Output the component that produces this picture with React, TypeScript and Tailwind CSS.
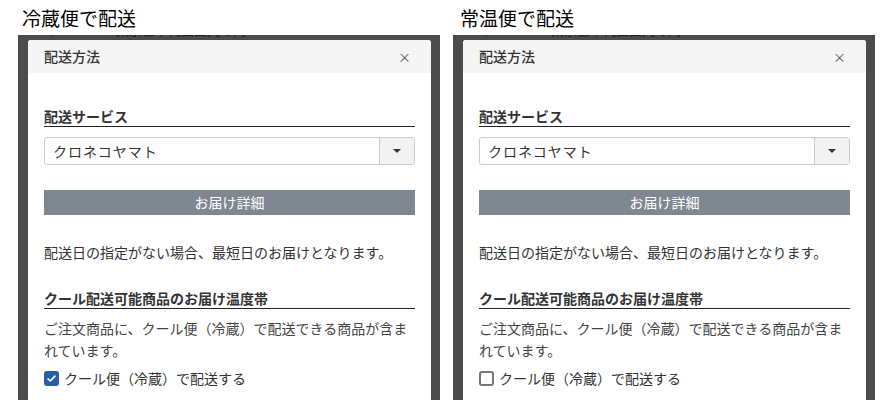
const font = { fontFamily: '"Noto Sans CJK JP", "Noto Sans", sans-serif' };

function CheckIcon() {
  return (
    <svg viewBox="0 0 16 16" className="h-[11px] w-[11px]" fill="none">
      <path d="M3 8.5l3.2 3L13 4.5" stroke="white" strokeWidth="2.4" strokeLinecap="round" strokeLinejoin="round" />
    </svg>
  );
}

function Panel({ title, checked, titleOffset }: { title: string; checked: boolean; titleOffset: string }) {
  return (
    <div className="flex w-[422px] shrink-0 flex-col">
      {/* page title above the modal screenshot */}
      <div className={`h-[35px] text-[19px] leading-[35px] text-black ${titleOffset}`}>{title}</div>

      {/* dimmed page + modal */}
      <div className="flex flex-1 flex-col overflow-hidden bg-[#4b4b4b] pl-[10px] pr-[9px]">
        <div className="h-[5px] overflow-hidden pl-[17px]">
          <div className="-mt-[13px] text-[13px] leading-[16px] text-[#1c1c1c]">〒100-0005 東京都千代田区丸の内1-1-1</div>
        </div>

        <div className="flex-1 rounded-t-[3px] bg-white">
          <div className="flex h-[33px] items-center justify-between rounded-t-[3px] bg-[#f5f5f5] pl-4 pr-[20px]">
            <span className="text-[14px] font-medium text-[#333]">配送方法</span>
            <span className="text-[13px] text-[#555]">×</span>
          </div>

          <div className="px-4 pt-[33px] text-[#333]">
            <div className="border-b border-[#222] text-[14px] font-bold leading-[20px]">配送サービス</div>

            <div className="mt-[10px] flex h-[28px] overflow-hidden rounded-[3px] border border-[#cccccc]">
              <div className="flex flex-1 items-center pl-[8px] text-[14px] tracking-[1px] text-[#333]">クロネコヤマト</div>
              <div className="flex w-[35px] items-center justify-center border-l border-[#cccccc] bg-[#f2f2f2]">
                <span className="h-0 w-0 border-x-[4px] border-t-[4px] border-x-transparent border-t-[#333]" />
              </div>
            </div>

            <div className="mt-[25px] flex h-[25px] items-center justify-center bg-[#7f8890] text-[14px] text-white">お届け詳細</div>

            <div className="mt-[27px] text-[14px] leading-[20px]">配送日の指定がない場合、最短日のお届けとなります。</div>

            <div className="mt-[26px] border-b border-[#222] text-[14px] font-bold leading-[20px]">クール配送可能商品のお届け温度帯</div>

            <p className="mt-[8px] text-[14px] leading-[22px] text-[#444]">ご注文商品に、クール便（冷蔵）で配送できる商品が含まれています。</p>

            <label className="mt-[7px] flex h-[20px] items-center gap-[5px] text-[14px] text-[#333]">
              {checked ? (
                <span className="flex h-[15px] w-[15px] items-center justify-center rounded-[3px] bg-[#2a5ea8]">
                  <CheckIcon />
                </span>
              ) : (
                <span className="h-[15px] w-[15px] rounded-[3px] border-2 border-[#777] bg-white" />
              )}
              クール便（冷蔵）で配送する
            </label>
          </div>
        </div>
      </div>
    </div>
  );
}

export default function App() {
  return (
    <div className="flex h-[400px] w-[896px] gap-[13px] overflow-hidden bg-white pl-[18px]" style={font}>
      <Panel title="冷蔵便で配送" checked titleOffset="pl-[4px]" />
      <Panel title="常温便で配送" checked={false} titleOffset="pl-[7px]" />
    </div>
  );
}
